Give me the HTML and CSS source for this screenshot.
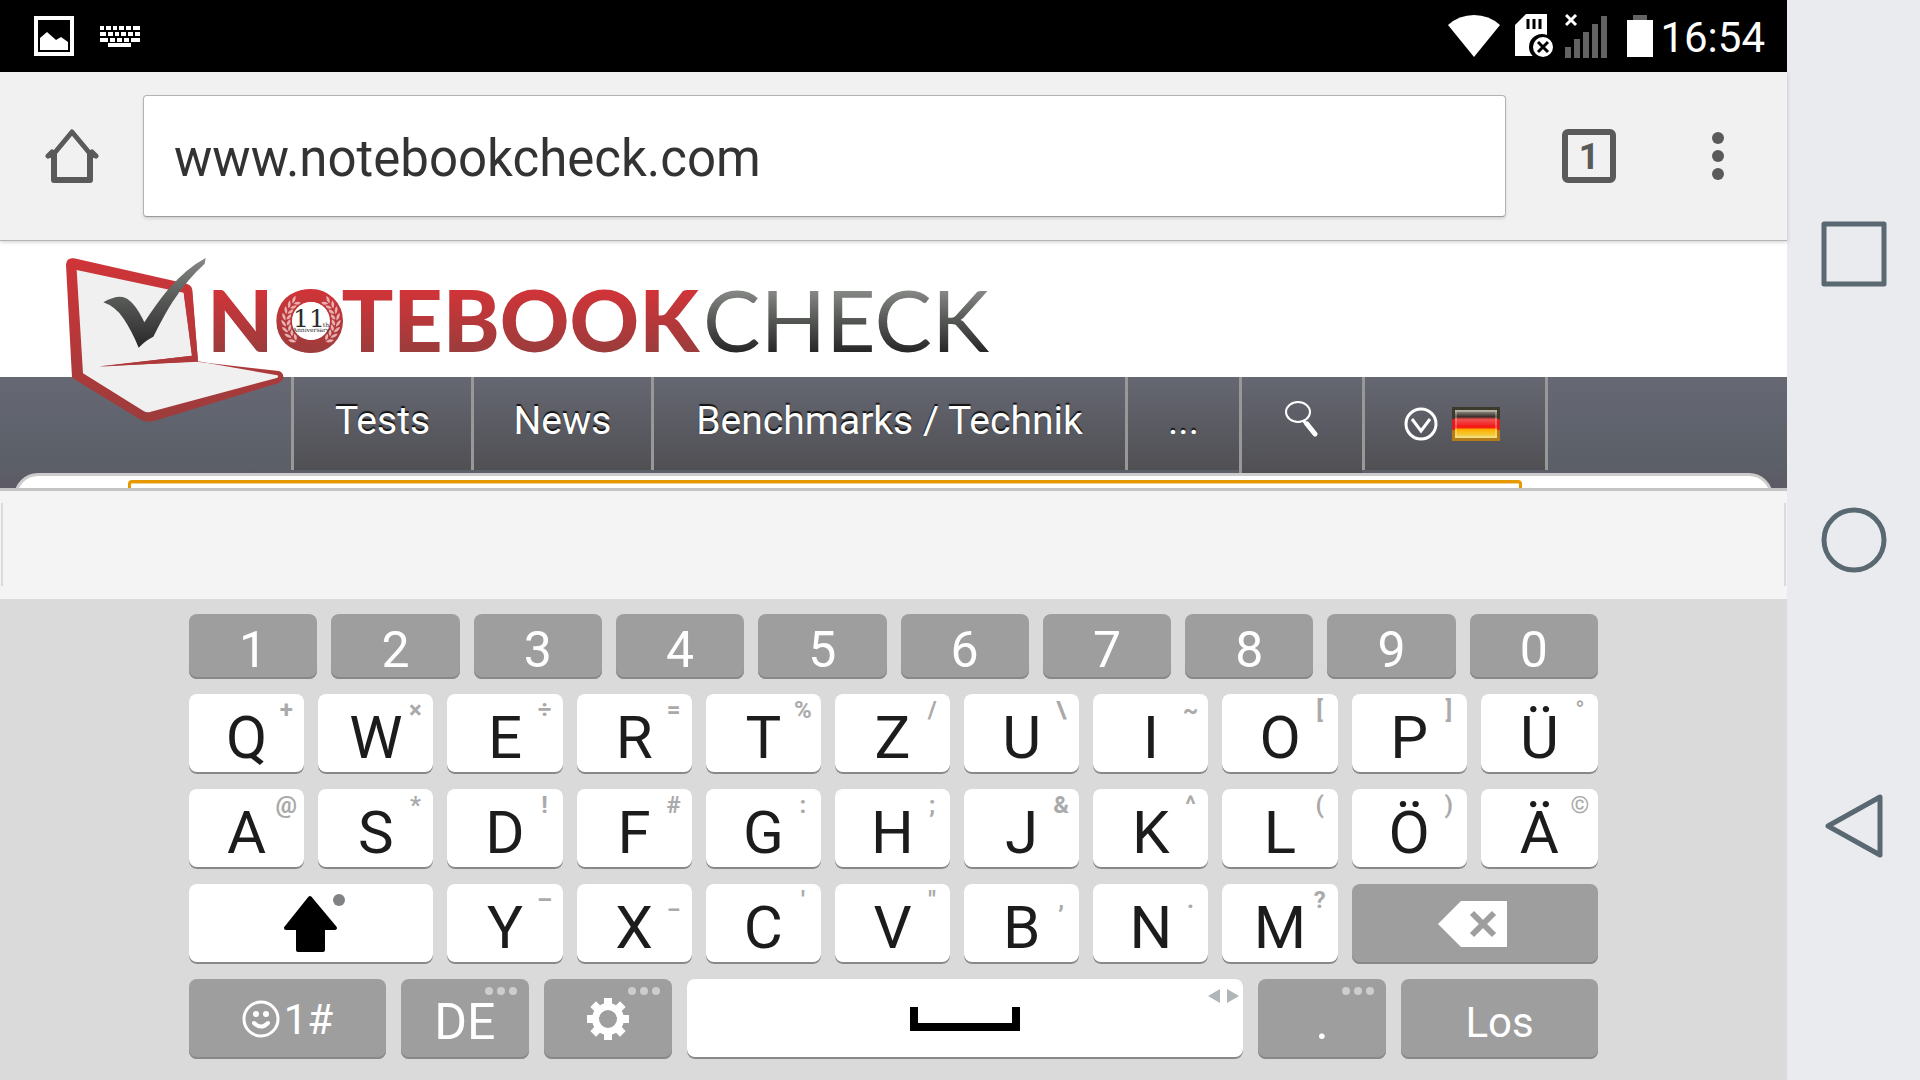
FILE: index.html
```html
<!DOCTYPE html>
<html lang="de">
<head>
  <meta charset="UTF-8" />
  <meta name="viewport" content="width=device-width, initial-scale=1.0" />
  <title>Notebookcheck</title>
  <link rel="stylesheet" href="styles.css">
</head>
<body>
  <div class="screen">

    <!-- STATUS BAR -->
    <div class="status-bar">
      <svg width="40" height="40" viewBox="0 0 40 40">
        <path fill="#fff" fill-rule="evenodd" d="M0 0h40v40H0zM4 4v32h32V4z"/>
        <path fill="#fff" d="M6 34V22l7-6 9 8 5-3 7 5v8z"/>
      </svg>
      <svg width="40" height="21" viewBox="0 0 40 21">
        <g stroke="#fff" stroke-width="4">
          <path d="M0 2h4M6 2h5M13 2h4M19 2h5M26 2h5M33 2h7"/>
          <path d="M0 8h6M8 8h5M15 8h4M21 8h5M28 8h5M35 8h5"/>
          <path d="M0 14h8M10 14h5M17 14h5M24 14h5M31 14h9M8 19h23"/>
        </g>
      </svg>
      <div class="status-right">
        <svg class="icon-wifi" width="52" height="42" viewBox="0 0 52 42">
          <path fill="#fff" d="M0 10Q11 0 26 0t26 10L26 42z"/>
        </svg>
        <svg width="38" height="44" viewBox="0 0 38 44">
          <path fill="#fff" d="M11 0h21v42H0V11z"/>
          <path stroke="#000" stroke-width="3" d="M13 5v10M19 5v10M25 5v10"/>
          <circle cx="27" cy="33" r="13" fill="#000"/>
          <circle cx="28" cy="33" r="10" fill="#fff"/>
          <path stroke="#000" stroke-width="3" d="M23 28l10 10M33 28L23 38"/>
        </svg>
        <svg class="icon-signal" width="42" height="44" viewBox="0 0 42 44">
          <path stroke="#fff" stroke-width="3" d="M1 1l10 10M11 1L1 11"/>
          <path fill="#636363" d="M0 33h6v11H0zM9 25h6v19H9zM18 18h6v26h-6zM27 10h6v34h-6zM36 2h6v42h-6z"/>
        </svg>
        <svg width="26" height="42" viewBox="0 0 26 42">
          <path fill="#636363" d="M6 0h14v5H6z"/>
          <path fill="#fff" d="M0 5h26v37H0z"/>
        </svg>
        <span class="clock">16:54</span>
      </div>
    </div>

    <!-- BROWSER TOOLBAR -->
    <header class="toolbar">
      <button class="home" type="button" aria-label="Home">
        <svg width="54" height="54" viewBox="0 0 54 54" fill="none" stroke="#5a5a5a" stroke-linejoin="round">
          <path stroke-width="5" stroke-linecap="round" d="M7 27L27 3l20 24" />
          <path stroke-width="5" stroke-linecap="round" d="M3 27L7 23M51 27l-4-4"/>
          <path stroke-width="6" d="M9 23v28h36V23"/>
        </svg>
      </button>
      <input class="address" type="text" aria-label="Adresse" value="www.notebookcheck.com" />
      <button class="tabs" type="button" aria-label="Tabs"><span class="tab-count">1</span></button>
      <button class="menu" type="button" aria-label="Menu">
        <svg width="12" height="48" viewBox="0 0 12 48" fill="#5a5a5a">
          <circle cx="6" cy="6" r="6"/><circle cx="6" cy="24" r="6"/><circle cx="6" cy="42" r="6"/>
        </svg>
      </button>
    </header>

    <!-- WEB PAGE -->
    <main class="page">
      <svg class="logo" width="960" height="190" viewBox="0 0 960 190" role="img" aria-label="Notebookcheck">
        <defs>
          <linearGradient id="red" gradientUnits="userSpaceOnUse" x1="0" y1="51" x2="0" y2="111">
            <stop offset="0" stop-color="#d03438"/><stop offset="1" stop-color="#9c3c3c"/>
          </linearGradient>
          <linearGradient id="grey" gradientUnits="userSpaceOnUse" x1="0" y1="51" x2="0" y2="111">
            <stop offset="0" stop-color="#868886"/><stop offset="0.5" stop-color="#545654"/><stop offset="1" stop-color="#282828"/>
          </linearGradient>
          <linearGradient id="ring" gradientUnits="userSpaceOnUse" x1="0" y1="-95" x2="0" y2="95">
            <stop offset="0" stop-color="#d03438"/><stop offset="1" stop-color="#9c3c3c"/>
          </linearGradient>
          <linearGradient id="lid" gradientUnits="userSpaceOnUse" x1="0" y1="50" x2="0" y2="545">
            <stop offset="0" stop-color="#d03438"/><stop offset="1" stop-color="#9c3c3c"/>
          </linearGradient>
          <linearGradient id="tick" gradientUnits="userSpaceOnUse" x1="0" y1="54" x2="0" y2="322">
            <stop offset="0" stop-color="#868886"/><stop offset="0.5" stop-color="#545654"/><stop offset="1" stop-color="#282828"/>
          </linearGradient>
          <g id="leaves">
            <path d="M-76 9q-14-7-12-22q13 7 12 22M-73 6q-2-12 11-18q4 13-11 18"/>
          </g>
          <g id="branch">
            <use href="#leaves" transform="rotate(-48)"/>
            <use href="#leaves" transform="rotate(-34)"/>
            <use href="#leaves" transform="rotate(-20)"/>
            <use href="#leaves" transform="rotate(-6)"/>
            <use href="#leaves" transform="rotate(8)"/>
            <use href="#leaves" transform="rotate(22)"/>
            <use href="#leaves" transform="rotate(36)"/>
            <use href="#leaves" transform="rotate(50)"/>
          </g>
        </defs>
        <g transform="scale(.3333)">
          <path fill="url(#lid)" d="M78 74Q80 52 102 55L440 131Q455 135 457 150L474 364L505 369L716 393Q730 397 730 411Q729 425 714 430L342 543Q318 549 298 537L96 413z"/>
          <path fill="#f0f0f0" d="M110 90L431 158L456 347L180 379L474 365L507 370L712 406Q718 410 710 414L330 516Q320 518 312 514L129 400z"/>
          <path fill="url(#lid)" d="M431 156L456 347L176 380L474 364L456 150z"/>
          <path fill="url(#tick)" d="M190 187Q230 164 255 173Q285 186 313 247Q350 190 385 148Q440 84 497 54L494 71Q440 120 398 185Q375 220 340 290Q318 300 296 323Q277 275 251 236Q226 199 190 187z"/>
        </g>
        <text class="word-bold" x="167" y="112">NOTEBOOK</text>
        <text class="word-light" x="663" y="112">CHECK</text>
        <g transform="translate(271 81) scale(.3333)">
          <circle r="76" fill="none" stroke="url(#ring)" stroke-width="40"/>
          <circle r="57" fill="#fff"/>
          <g fill="#e8b0b3">
            <use href="#branch"/>
            <use href="#branch" transform="scale(-1 1)"/>
          </g>
        </g>
        <text class="badge-number" x="269" y="87">11</text>
        <text class="badge-small" x="286" y="87">th</text>
        <text class="badge-small" x="271" y="92">Anniversary</text>
      </svg>

      <nav class="site-nav">
        <a href="#">Tests</a>
        <a href="#">News</a>
        <a href="#">Benchmarks / Technik</a>
        <a href="#">...</a>
        <a href="#" class="search" aria-label="Suche">
          <svg width="34" height="36" viewBox="0 0 34 36" fill="none" stroke="#fff">
            <ellipse cx="13" cy="11" rx="12" ry="10" stroke-width="2"/>
            <path stroke-width="3" d="M18 19l4 5"/>
            <path stroke-width="5" stroke-linecap="round" d="M22 23l8 10"/>
          </svg>
        </a>
        <a href="#" class="language" aria-label="Sprache">
          <svg width="34" height="34" viewBox="0 0 34 34" fill="none" stroke="#fff" stroke-width="3">
            <circle cx="17" cy="17" r="15"/>
            <path d="M8 12l9 12 9-12"/>
          </svg>
          <svg width="48" height="34" viewBox="0 0 48 34">
            <defs>
              <linearGradient id="flag" x1="0" y1="0" x2="0" y2="1">
                <stop offset="0" stop-color="#a8a890"/><stop offset="0.16" stop-color="#5a5450"/><stop offset="0.24" stop-color="#3a2c28"/>
                <stop offset="0.34" stop-color="#f05050"/><stop offset="0.62" stop-color="#f41410"/>
                <stop offset="0.7" stop-color="#ffb000"/><stop offset="1" stop-color="#ecd85c"/>
              </linearGradient>
            </defs>
            <path fill="#3c3a2c" d="M0 0h48v12H0z"/>
            <path fill="#e01c1c" d="M0 12h48v11H0z"/>
            <path fill="#b47c18" d="M0 23h48v11H0z"/>
            <path fill="url(#flag)" d="M3 3h42v28H3z"/>
            <path fill="none" stroke="#fff" stroke-opacity=".25" stroke-width="2" d="M4 4h40v26H4z"/>
          </svg>
        </a>
      </nav>
      <div class="content-card"><div class="highlight-box"></div></div>
    </main>

    <!-- KEYBOARD -->
    <div class="suggestions"></div>
    <div class="keyboard">
      <div class="row numbers">
        <button class="key grey">1</button>
        <button class="key grey">2</button>
        <button class="key grey">3</button>
        <button class="key grey">4</button>
        <button class="key grey">5</button>
        <button class="key grey">6</button>
        <button class="key grey">7</button>
        <button class="key grey">8</button>
        <button class="key grey">9</button>
        <button class="key grey">0</button>
      </div>
      <div class="row">
        <button class="key">Q<span class="hint">+</span></button>
        <button class="key">W<span class="hint">×</span></button>
        <button class="key">E<span class="hint">÷</span></button>
        <button class="key">R<span class="hint">=</span></button>
        <button class="key">T<span class="hint">%</span></button>
        <button class="key">Z<span class="hint">/</span></button>
        <button class="key">U<span class="hint">\</span></button>
        <button class="key">I<span class="hint">~</span></button>
        <button class="key">O<span class="hint">[</span></button>
        <button class="key">P<span class="hint">]</span></button>
        <button class="key">Ü<span class="hint">°</span></button>
      </div>
      <div class="row">
        <button class="key">A<span class="hint">@</span></button>
        <button class="key">S<span class="hint">*</span></button>
        <button class="key">D<span class="hint">!</span></button>
        <button class="key">F<span class="hint">#</span></button>
        <button class="key">G<span class="hint">:</span></button>
        <button class="key">H<span class="hint">;</span></button>
        <button class="key">J<span class="hint">&amp;</span></button>
        <button class="key">K<span class="hint">^</span></button>
        <button class="key">L<span class="hint">(</span></button>
        <button class="key">Ö<span class="hint">)</span></button>
        <button class="key">Ä<span class="hint">©</span></button>
      </div>
      <div class="row">
        <button class="key wide symbol" aria-label="Shift">
          <svg width="70" height="60" viewBox="0 0 70 60">
            <path stroke="#000" stroke-width="4" stroke-linejoin="round" d="M34 4L59 34H47V56H22V34H10z"/>
            <circle cx="63" cy="6" r="6" fill="#808284"/>
          </svg>
        </button>
        <button class="key">Y<span class="hint">–</span></button>
        <button class="key">X<span class="hint">_</span></button>
        <button class="key">C<span class="hint">'</span></button>
        <button class="key">V<span class="hint">"</span></button>
        <button class="key">B<span class="hint">,</span></button>
        <button class="key">N<span class="hint">.</span></button>
        <button class="key">M<span class="hint">?</span></button>
        <button class="key wide grey symbol" aria-label="Löschen">
          <svg width="74" height="46" viewBox="0 0 74 46">
            <path fill="#fff" d="M0 23L23 0h46v46H23z"/>
            <path stroke="#9e9e9e" stroke-width="6" d="M34 12l22 22M56 12L34 34"/>
          </svg>
        </button>
      </div>
      <div class="row bottom">
        <button class="key grey symbol">
          <svg width="38" height="38" viewBox="0 0 38 38">
            <circle cx="19" cy="19" r="17" fill="none" stroke="#fff" stroke-width="3"/>
            <circle cx="14" cy="14" r="3" fill="#fff"/><circle cx="24" cy="14" r="3" fill="#fff"/>
            <path fill="none" stroke="#fff" stroke-width="4" stroke-linecap="round" d="M12 23q7 7 14 0"/>
          </svg>
          1#
        </button>
        <button class="key grey">DE
          <svg class="more" width="32" height="8" viewBox="0 0 32 8"><circle cx="4" cy="4" r="4"/><circle cx="16" cy="4" r="4"/><circle cx="28" cy="4" r="4"/></svg>
        </button>
        <button class="key grey symbol" aria-label="Einstellungen">
          <svg width="42" height="42" viewBox="-21 -21 42 42">
            <circle r="12.5" fill="none" stroke="#fff" stroke-width="7"/>
            <g stroke="#fff" stroke-width="8">
              <path d="M0-21v7M0 14v7M-21 0h7M14 0h7"/>
              <path d="M0-21v7M0 14v7M-21 0h7M14 0h7" transform="rotate(45)"/>
            </g>
          </svg>
          <svg class="more" width="32" height="8" viewBox="0 0 32 8"><circle cx="4" cy="4" r="4"/><circle cx="16" cy="4" r="4"/><circle cx="28" cy="4" r="4"/></svg>
        </button>
        <button class="key symbol" aria-label="Leertaste">
          <svg width="110" height="24" viewBox="0 0 110 24"><path d="M0 0h8v16h94V0h8v24H0z"/></svg>
          <svg class="arrows" width="31" height="14" viewBox="0 0 31 14"><path d="M12 0v14L0 7zM19 0v14l12-7z"/></svg>
        </button>
        <button class="key grey">.
          <svg class="more" width="32" height="8" viewBox="0 0 32 8"><circle cx="4" cy="4" r="4"/><circle cx="16" cy="4" r="4"/><circle cx="28" cy="4" r="4"/></svg>
        </button>
        <button class="key grey go">Los</button>
      </div>
    </div>
  </div>

  <!-- SYSTEM KEYS -->
  <div class="system-keys">
    <button type="button" aria-label="Übersicht">
      <svg width="66" height="66" viewBox="0 0 66 66"><path stroke-width="5" d="M3 3h60v60H3z"/></svg>
    </button>
    <button type="button" aria-label="Startseite">
      <svg width="66" height="66" viewBox="0 0 66 66"><circle cx="33" cy="33" r="30" stroke-width="5"/></svg>
    </button>
    <button type="button" aria-label="Zurück">
      <svg width="66" height="66" viewBox="0 0 66 66"><path stroke-width="5" d="M7 33L59 4v58z"/></svg>
    </button>
  </div>
</body>
</html>
```
FILE: styles.css
```css
* {
  box-sizing: border-box;
}
body {
  margin: 0;
  min-height: 100vh;
  display: flex;
  font-family: Roboto, sans-serif;
  background: #e9ebef;
}
button {
  margin: 0;
  padding: 0;
  border: none;
  background: none;
  font-family: inherit;
  cursor: pointer;
}
svg {
  display: block;
}
.screen {
  flex: 1;
  min-width: 0;
  display: flex;
  flex-direction: column;
}

/* status bar */
.status-bar {
  height: 72px;
  padding: 0 22px 0 34px;
  display: flex;
  align-items: center;
  gap: 26px;
  background: #000;
  color: #fff;
}
.status-right {
  margin-left: auto;
  display: flex;
  align-items: center;
  gap: 12px;
}
.icon-wifi {
  margin-right: 3px;
}
.icon-signal {
  margin-right: 8px;
}
.clock {
  margin-left: -5px;
  padding-top: 4px;
  font-size: 42px;
  line-height: 48px;
}

/* browser toolbar */
.toolbar {
  position: relative;
  z-index: 1;
  height: 169px;
  padding-right: 23px;
  display: flex;
  align-items: center;
  background: #f1f1f1;
  border-bottom: 1px solid #b4b4b4;
  box-shadow: 0 1px 4px rgba(0,0,0,0.2);
}
.home {
  width: 143px;
  display: flex;
  justify-content: center;
}
.address {
  flex: 1;
  min-width: 0;
  height: 122px;
  padding: 5px 30px 0;
  font-family: inherit;
  font-size: 51px;
  color: #333;
  background: #fff;
  border: 1px solid #b3b3b3;
  border-bottom-color: #999;
  border-radius: 4px;
  box-shadow: 0 2px 3px rgba(0,0,0,0.12);
}
.tabs {
  width: 166px;
  display: flex;
  justify-content: center;
}
.tab-count {
  width: 54px;
  height: 54px;
  border: 6px solid #5a5a5a;
  border-radius: 6px;
  font-size: 36px;
  font-weight: bold;
  line-height: 44px;
  color: #5a5a5a;
}
.menu {
  width: 92px;
  display: flex;
  justify-content: center;
}

/* web page */
.page {
  flex: 1;
  position: relative;
  padding-top: 136px;
  overflow: hidden;
  background: linear-gradient(#fff 136px, #666874 136px, #5b6068 220px, #5c5a66 100%);
}
.logo {
  position: absolute;
  left: 40px;
  top: -1px;
  z-index: 1;
}
.word-bold, .word-light {
  font-family: Lato, sans-serif;
  font-size: 86px;
}
.word-bold {
  font-weight: 900;
  fill: url(#red);
}
.word-light {
  font-weight: 400;
  fill: url(#grey);
}
.badge-number {
  font-family: "DejaVu Serif", serif;
  font-size: 25px;
  text-anchor: middle;
  fill: #2c2c2c;
}
.badge-small {
  font-family: "DejaVu Serif", serif;
  font-size: 6px;
  text-anchor: middle;
  fill: #2c2c2c;
}
.site-nav {
  margin-left: 291px;
  display: grid;
  grid-template-columns: 180px 180px 474px 114px 123px 186px;
  align-items: start;
}
.site-nav a {
  height: 93px;
  display: flex;
  justify-content: center;
  border-left: 3px solid #989898;
  background: linear-gradient(#656772, #505054);
  color: #fff;
  font-size: 39px;
  line-height: 88px;
  text-decoration: none;
  text-shadow: 0 -2px 1px #111;
}
.site-nav .search {
  height: 96px;
  padding-top: 24px;
}
.site-nav .language {
  align-items: center;
  justify-content: flex-start;
  gap: 14px;
  padding-left: 39px;
  border-right: 3px solid #989898;
}
.content-card {
  height: 40px;
  margin: 0 14px -25px;
  padding: 4px 248px 0 111px;
  background: #fff;
  border: 3px solid #ccc;
  border-radius: 24px 24px 0 0;
}
.highlight-box {
  height: 40px;
  border: 3px solid #e69900;
  border-radius: 4px;
  box-shadow: inset 0 1px #f3cf88;
}

/* keyboard */
.suggestions {
  height: 111px;
  padding: 12px 0 13px;
  background: #f4f4f4;
  border-top: 3px solid #c4c4c4;
}
.suggestions::before {
  content: "";
  display: block;
  height: 83px;
  margin: 0 1px;
  border: solid #dadada;
  border-width: 0 2px;
}
.keyboard {
  padding: 15px 189px 21px;
  display: grid;
  gap: 15px;
  background: #dadada;
}
.row {
  display: grid;
  grid-template-columns: repeat(10, 115fr) 117fr;
  gap: 14px;
  height: 80px;
}
.numbers {
  grid-template-columns: repeat(10, 1fr);
  height: 65px;
}
.bottom {
  grid-template-columns: 197fr 128fr 128fr 557fr 128fr 197fr;
  gap: 15px;
}
.key {
  position: relative;
  display: flex;
  align-items: center;
  justify-content: center;
  padding-top: 6px;
  min-width: 0;
  border-radius: 8px;
  background: #fff;
  box-shadow: inset 0 -2px #888;
  color: #1c1c1c;
  font-size: 60px;
}
.grey {
  background: #9e9e9e;
  color: #fff;
  font-size: 50px;
}
.symbol {
  padding-top: 0;
  gap: 4px;
  font-size: 42px;
}
.go {
  font-size: 42px;
}
.wide {
  grid-column: span 2;
}
.hint {
  position: absolute;
  top: 2px;
  right: 0;
  width: 36px;
  font-size: 24px;
  font-weight: 700;
  line-height: 28px;
  text-align: center;
  color: #aaa;
}
.more {
  position: absolute;
  top: 8px;
  right: 12px;
  fill: #cdcdcd;
}
.arrows {
  position: absolute;
  top: 10px;
  right: 4px;
  fill: #b0b5b8;
}

/* system keys */
.system-keys {
  width: 133px;
  padding: 221px 0;
  display: flex;
  flex-direction: column;
  align-items: center;
  justify-content: space-between;
  background: #e9ebef;
}
.system-keys svg {
  fill: none;
  stroke: #5a6872;
  stroke-linejoin: round;
}
```
